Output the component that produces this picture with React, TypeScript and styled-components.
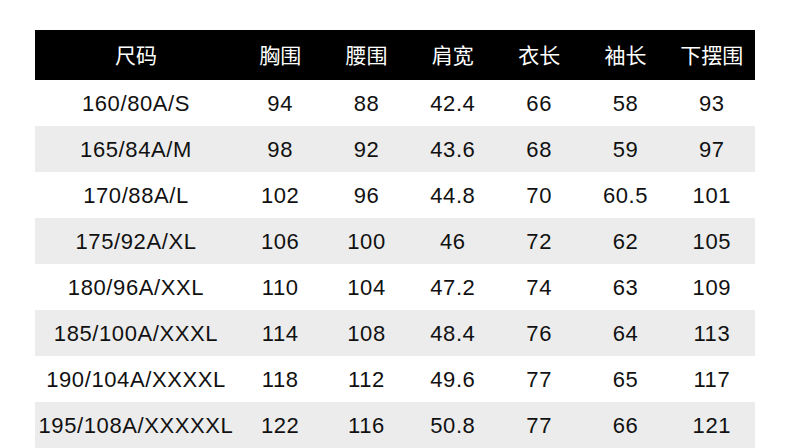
import React from "react";
import styled, { createGlobalStyle } from "styled-components";

const Global = createGlobalStyle`
  html, body { margin: 0; padding: 0; background: #ffffff; }
  body { font-family: "Liberation Sans", Arial, "Noto Sans CJK SC", sans-serif; }
`;

const Page = styled.div`
  width: 790px;
  height: 448px;
  padding: 30px 35px 0 35px;
  box-sizing: border-box;
  overflow: hidden;
  background: #ffffff;
`;

const Table = styled.div`
  display: grid;
  grid-template-columns: 202px repeat(6, 1fr);
  width: 720px;
`;

const HeadCell = styled.div`
  height: 50px;
  background: #000000;
  color: #ffffff;
  display: flex;
  align-items: center;
  justify-content: center;
  font-family: "Noto Sans CJK SC", sans-serif;
  font-size: 21px;
  line-height: 1;
  padding-bottom: 1px;
  box-sizing: border-box;
`;

const Cell = styled.div<{ $shade: boolean }>`
  height: 46px;
  background: ${(p) => (p.$shade ? "#ececec" : "#ffffff")};
  color: #111111;
  display: flex;
  align-items: center;
  justify-content: center;
  font-family: "Liberation Sans", Arial, sans-serif;
  font-size: 22px;
  letter-spacing: 0.6px;
  line-height: 1;
  padding-top: 1px;
  box-sizing: border-box;
  white-space: nowrap;
`;

const headers = ["尺码", "胸围", "腰围", "肩宽", "衣长", "袖长", "下摆围"];

const rows: string[][] = [
  ["160/80A/S", "94", "88", "42.4", "66", "58", "93"],
  ["165/84A/M", "98", "92", "43.6", "68", "59", "97"],
  ["170/88A/L", "102", "96", "44.8", "70", "60.5", "101"],
  ["175/92A/XL", "106", "100", "46", "72", "62", "105"],
  ["180/96A/XXL", "110", "104", "47.2", "74", "63", "109"],
  ["185/100A/XXXL", "114", "108", "48.4", "76", "64", "113"],
  ["190/104A/XXXXL", "118", "112", "49.6", "77", "65", "117"],
  ["195/108A/XXXXXL", "122", "116", "50.8", "77", "66", "121"],
];

export default function App() {
  return (
    <>
      <Global />
      <Page>
        <Table>
          {headers.map((h) => (
            <HeadCell key={h}>{h}</HeadCell>
          ))}
          {rows.map((r, i) =>
            r.map((v, j) => (
              <Cell key={`${i}-${j}`} $shade={i % 2 === 1}>
                {v}
              </Cell>
            ))
          )}
        </Table>
      </Page>
    </>
  );
}
